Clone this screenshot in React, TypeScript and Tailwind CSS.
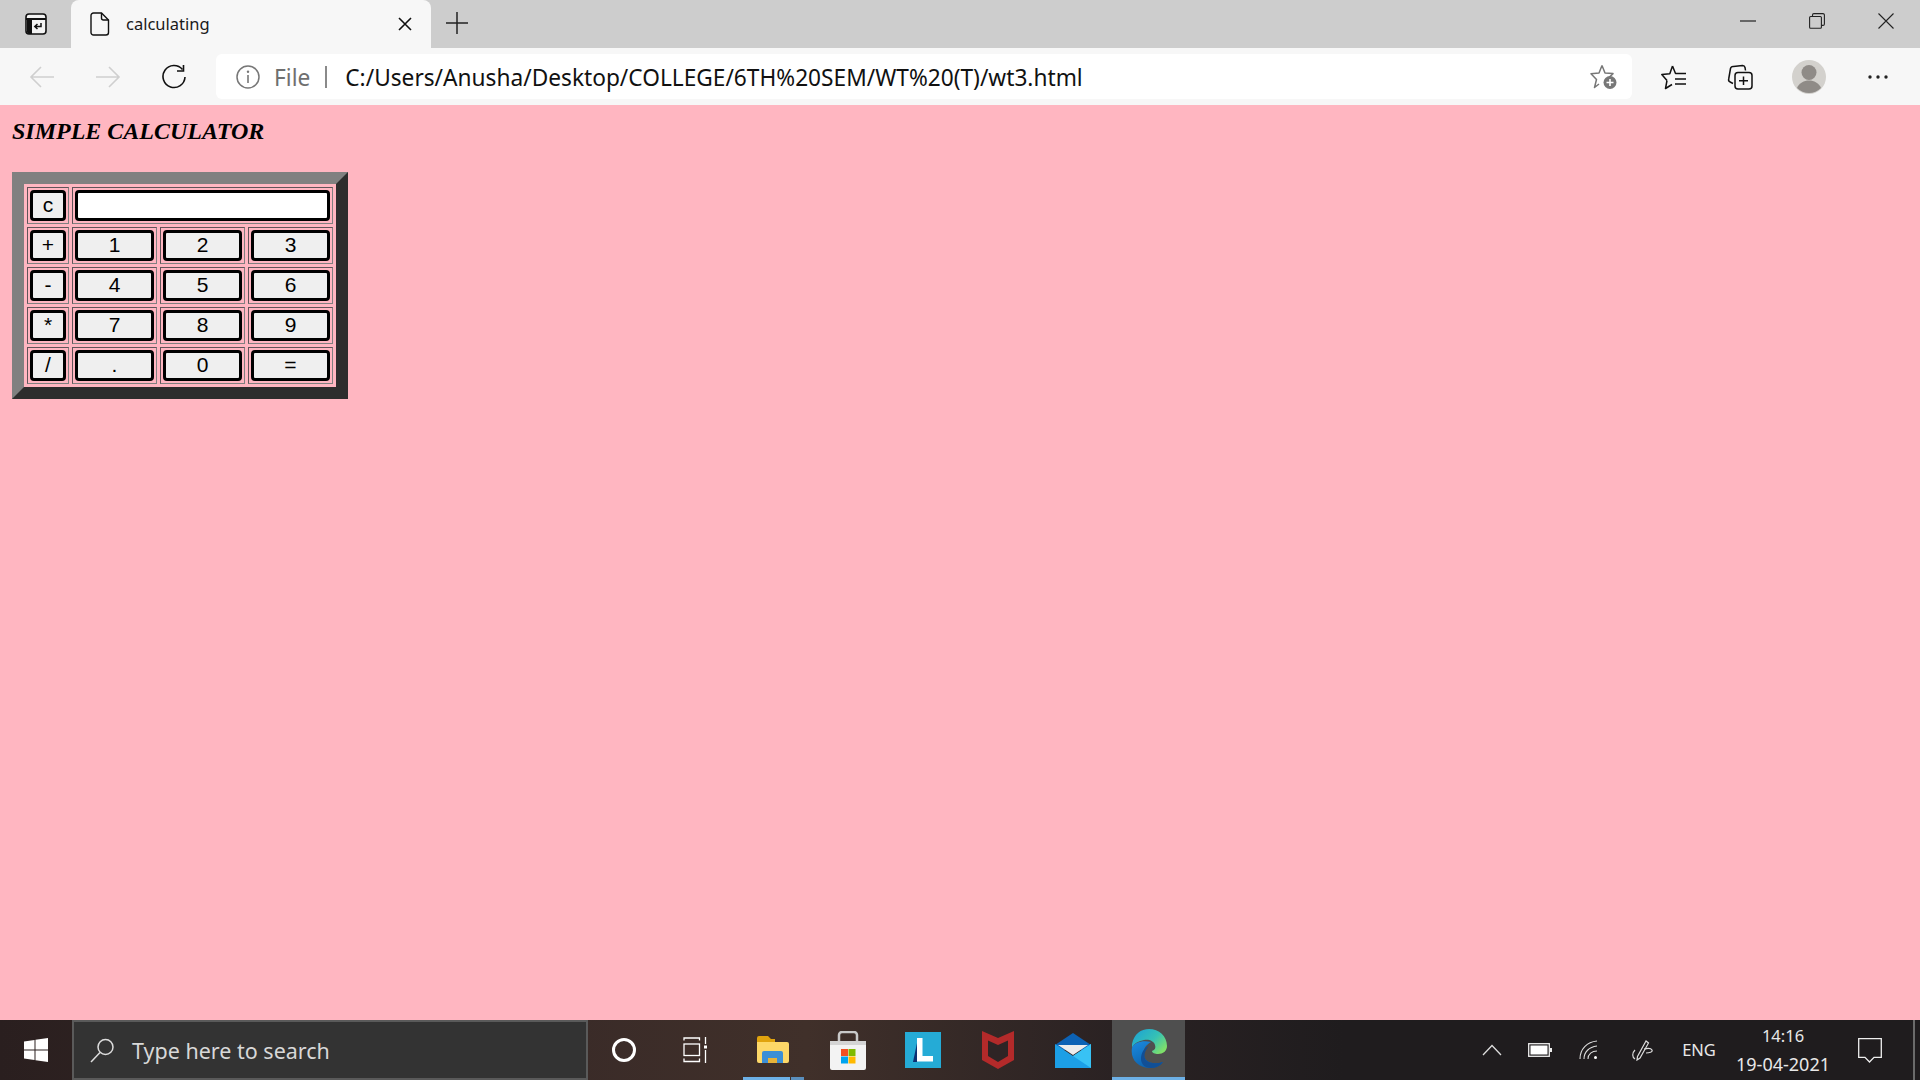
import React from "react";

const uiFont = "font-['Noto_Sans','Open_Sans',sans-serif]";

const Slot = ({ w, children }: { w: string; children: React.ReactNode }) => (
  <div className={`flex h-full shrink-0 items-center justify-center ${w}`}>{children}</div>
);

// ── Browser icons ─────────────────────────────────────────────
const TabActionsIcon = () => (
  <svg width="22" height="22" viewBox="0 0 22 22" fill="none">
    <rect x="1" y="1" width="20" height="20" rx="3" fill="#f3f3f3" stroke="#111" strokeWidth="1.6" />
    <path d="M1 6h20" stroke="#111" strokeWidth="2" />
    <path d="M2 6h5v15H4a2 2 0 0 1-2-2z" fill="#111" />
    <path d="M16 10v3.5h-6M12.5 11l-2.7 2.5 2.7 2.5" stroke="#111" strokeWidth="1.5" />
  </svg>
);

const FileIcon = () => (
  <svg width="20" height="24" viewBox="0 0 20 24" fill="none" stroke="#111" strokeWidth="1.4">
    <path d="M3.5 1h8L18.5 8v12.5a2.5 2.5 0 0 1-2.5 2.5H3.5A2.5 2.5 0 0 1 1 20.5V3.5A2.5 2.5 0 0 1 3.5 1z" />
    <path d="M11.5 1v5a2 2 0 0 0 2 2h5" />
  </svg>
);

const Arrow = ({ flip }: { flip?: boolean }) => (
  <svg width="26" height="24" viewBox="0 0 26 24" fill="none" stroke="#cfcfcf" strokeWidth="1.6" className={flip ? "-scale-x-100" : ""}>
    <path d="M25 12H2M12 2 2 12l10 10" />
  </svg>
);

const ReloadIcon = () => (
  <svg width="26" height="26" viewBox="0 0 26 26" fill="none" stroke="#111" strokeWidth="1.6">
    <path d="M21.5 5.5A11 11 0 1 0 24 13" />
    <path d="M22.5 1v6H16" />
  </svg>
);

const InfoIcon = () => (
  <svg width="24" height="24" viewBox="0 0 24 24" fill="none">
    <circle cx="12" cy="12" r="11" stroke="#777" strokeWidth="1.5" />
    <circle cx="12" cy="6.8" r="1.2" fill="#777" />
    <path d="M12 10v8" stroke="#777" strokeWidth="1.6" />
  </svg>
);

const StarAddIcon = () => (
  <svg width="28" height="26" viewBox="0 0 28 26" fill="none">
    <path d="M12 1.5 15 9l8 .6-5 4.9M9 20l-4.5 3.5 2-8L1 9.7 9 9l3-7.5" stroke="#777" strokeWidth="1.5" strokeLinejoin="round" />
    <circle cx="20" cy="18.5" r="6.5" fill="#777" />
    <path d="M20 15v7M16.5 18.5h7" stroke="#fff" strokeWidth="1.6" />
  </svg>
);

const FavoritesIcon = () => (
  <svg width="26" height="26" viewBox="0 0 26 26" fill="none" stroke="#111" strokeWidth="1.5">
    <path d="M11.5 2 14.5 9.5H16M6 16.5 4.5 24.5 11 20.5M6 16.5.8 10.5l8-.8L11.5 2" strokeLinejoin="round" />
    <path d="M16 9.5h9M14 15h11M14 20h11" />
  </svg>
);

const CollectionsIcon = () => (
  <svg width="26" height="26" viewBox="0 0 26 26" fill="none" stroke="#111" strokeWidth="1.5">
    <path d="M6 19.5 3.2 18a2.5 2.5 0 0 1-1.5-3L3.5 4.5A2.5 2.5 0 0 1 6.5 2.5L15.5 1.5a2.5 2.5 0 0 1 2.5 2l.5 3" />
    <rect x="8" y="8.5" width="17" height="16.5" rx="3" />
    <path d="M16.5 12.5V21M12 16.8h9" />
  </svg>
);

const AvatarIcon = () => (
  <svg width="34" height="34" viewBox="0 0 34 34">
    <circle cx="17" cy="17" r="17" fill="#d3d1cd" />
    <circle cx="17" cy="12.5" r="7.5" fill="#8f8b87" />
    <path d="M5 28c2-5 7-7.5 12-7.5S27 23 29 28a17 17 0 0 1-24 0z" fill="#8f8b87" />
  </svg>
);

const DotsIcon = () => (
  <svg width="20" height="4" viewBox="0 0 20 4" fill="#222">
    <circle cx="2" cy="2" r="1.7" />
    <circle cx="10" cy="2" r="1.7" />
    <circle cx="18" cy="2" r="1.7" />
  </svg>
);

// ── Taskbar icons ─────────────────────────────────────────────
const WindowsLogo = () => (
  <svg width="24" height="24" viewBox="0 0 24 24" fill="#fff">
    <path d="M0 3.4 10.5 2v9.5H0zM11.5 1.8 24 0v11.5H11.5zM0 12.5h10.5V22L0 20.6zM11.5 12.5H24V24l-12.500-1.800z" />
  </svg>
);

const SearchIcon = () => (
  <svg width="25" height="25" viewBox="0 0 25 25" fill="none" stroke="#ddd" strokeWidth="1.5">
    <circle cx="15.5" cy="9" r="7.5" />
    <path d="M10 14.5 1 24" />
  </svg>
);

const TaskViewIcon = () => (
  <svg width="26" height="26" viewBox="0 0 26 26" fill="none" stroke="#fff" strokeWidth="1.3">
    <path d="M1 4V1.5h15.5V4M1 22v3h15.5v-3" transform="translate(0 -.5)" />
    <rect x="1" y="7" width="15.5" height="11.5" />
    <path d="M22.5 0v7M22.5 13v13" />
    <rect x="21" y="8.5" width="3" height="3" fill="#fff" stroke="none" />
  </svg>
);

const FolderIcon = () => (
  <svg width="32" height="29" viewBox="0 0 32 29">
    <path d="M0 2a2 2 0 0 1 2-2h9l3 3h4v4H0z" fill="#e0a30e" />
    <path d="M0 6h30a2 2 0 0 1 2 2v17a2 2 0 0 1-2 2H2a2 2 0 0 1-2-2z" fill="#fdd868" />
    <path d="M5 27V17a2 2 0 0 1 2-2h17a2 2 0 0 1 2 2v10h-6v-5H11v5z" fill="#3b8fd6" />
    <path d="M11 22h9v5h-9z" fill="#e6b33a" />
  </svg>
);

const StoreIcon = () => (
  <svg width="36" height="39" viewBox="0 0 36 39">
    <path d="M9 10V4a3 3 0 0 1 3-3h12a3 3 0 0 1 3 3v6" fill="none" stroke="#c9c9c9" strokeWidth="2.5" />
    <path d="M0 10h36v27a2 2 0 0 1-2 2H2a2 2 0 0 1-2-2z" fill="#f3f3f3" />
    <path d="M0 10h36v4H0z" fill="#d4d4d4" />
    <path d="M11 18h7v7h-7z" fill="#f25022" />
    <path d="M18.5 18h7v7h-7z" fill="#7fba00" />
    <path d="M11 25.5h7v7h-7z" fill="#00a4ef" />
    <path d="M18.5 25.5h7v7h-7z" fill="#ffb900" />
  </svg>
);

const LIcon = () => (
  <svg width="36" height="36" viewBox="0 0 36 36">
    <rect width="36" height="36" fill="#25abd6" />
    <path d="M8 30 12 11v19z" fill="#0b2f73" />
    <path d="M12 6h5.500v18H28v5.500H12z" fill="#fff" />
  </svg>
);

const McAfeeIcon = () => (
  <svg width="32" height="38" viewBox="0 0 32 38">
    <path d="M0 0 16 7 32 0v29l-16 9-16-9z" fill="#b32a2a" />
    <path d="M6 9.500 16 14l10-4.500V25l-10 6-10-6z" fill="#2e2425" />
  </svg>
);

const MailIcon = () => (
  <svg width="36" height="35" viewBox="0 0 36 35">
    <path d="M0 12 18 0l18 12v5H0z" fill="#0c62b5" />
    <path d="M3 12h30L18 22z" fill="#ececec" />
    <path d="M0 11 18 23l18-12v24H0z" fill="#1c9fe6" />
    <path d="M18 23 36 11v24z" fill="#38c2f4" />
  </svg>
);

const EdgeIcon = () => (
  <svg width="36" height="39" viewBox="0 0 36 39">
    <defs>
      <linearGradient id="edgeTop" x1="0" y1="0" x2="1" y2="0.7">
        <stop offset="0" stopColor="#1aa0d8" />
        <stop offset="0.6" stopColor="#35c1b5" />
        <stop offset="1" stopColor="#7fe06a" />
      </linearGradient>
      <linearGradient id="edgeBottom" x1="0" y1="0" x2="0.6" y2="1">
        <stop offset="0" stopColor="#1b8be0" />
        <stop offset="1" stopColor="#0c5ea8" />
      </linearGradient>
    </defs>
    <path d="M1 15C3 5 10 0 18 0c10 0 18 7 18 17 0 5-4 8-9 8-3 0-6-1-6-3 3-1 4-3 3-6-1-4-6-6-11-5C8 12 3 14 1 19z" fill="url(#edgeTop)" />
    <path d="M1 19c-2 11 6 20 17 20 6 0 11-2 14-6-6 2-13 2-17-2-4-5-3-11 1-15 2-2 4-3 4-3-8-2-17 0-19 6z" fill="url(#edgeBottom)" />
    <path d="M15 31c4 4 11 4 17 2-3 4-7 6-12 6-6 0-10-4-10-9 0-6 3-11 8-13-4 4-6 10-3 14z" fill="#114f96" />
  </svg>
);

const BatteryIcon = () => (
  <svg width="24" height="14" viewBox="0 0 24 14">
    <rect x=".7" y=".7" width="20.6" height="12.6" fill="none" stroke="#eee" strokeWidth="1.3" />
    <rect x="2.5" y="2.5" width="17" height="9" fill="#fff" />
    <rect x="22" y="5" width="2" height="4" fill="#eee" />
  </svg>
);

const WifiIcon = () => (
  <svg width="20" height="20" viewBox="0 0 20 20" fill="none" stroke="#ddd" strokeWidth="1.1">
    <path d="M1 19C1 9 8 2 18 1" />
    <path d="M5 19c0-7 5-12 13-13" />
    <path d="M9 19c0-5 4-8 9-8" />
    <circle cx="16.5" cy="17.5" r="1.5" fill="#fff" stroke="none" />
  </svg>
);

const PenIcon = () => (
  <svg width="21" height="21" viewBox="0 0 21 21" fill="none" stroke="#ddd" strokeWidth="1.2">
    <path d="M14 1 5.5 16.500 5 20l3-2L16.500 3z" />
    <path d="M3 10c-3 3-3 7 0 9M12 9c4-1 7-1 8 1s-3 3-6 3" />
  </svg>
);

const NotificationIcon = () => (
  <svg width="24" height="25" viewBox="0 0 24 25" fill="none" stroke="#eee" strokeWidth="1.3">
    <path d="M.7.7h22.600v18.600H16L11.500 24 7 19.300H.7z" />
  </svg>
);

// ── Calculator ────────────────────────────────────────────────
const cellClass =
  "flex border border-t-[#5f5458] border-l-[#5f5458] border-r-[#808080] border-b-[#808080] p-[2px]";
const keyClass =
  "h-full w-full rounded-[4px] border-[3px] border-black bg-[#efefef] pb-[2px] text-center font-['Liberation_Sans',sans-serif] text-[21px] leading-none text-black";

const Key = ({ label }: { label: string }) => (
  <div className={cellClass}>
    <button className={keyClass}>{label}</button>
  </div>
);

const rows = [
  ["+", "1", "2", "3"],
  ["-", "4", "5", "6"],
  ["*", "7", "8", "9"],
  ["/", ".", "0", "="],
];

const Calculator = () => (
  <div className="w-[336px] border-[12px] border-t-[#808080] border-l-[#808080] border-r-[#2d2d2d] border-b-[#2d2d2d]">
    <div className="grid grid-cols-[42px_85px_85px_85px] auto-rows-[37px] gap-[3px] p-[3px]">
      <Key label="c" />
      <div className={`col-span-3 ${cellClass}`}>
        <input readOnly className="h-full w-full rounded-[4px] border-[3px] border-black bg-white outline-none" />
      </div>
      {rows.map((row) => row.map((label) => <Key key={label} label={label} />))}
    </div>
  </div>
);

export default function App() {
  return (
    <div className={`flex h-screen w-screen flex-col overflow-hidden bg-[#ffb6c1] ${uiFont}`}>
      {/* ── Title bar ─────────────────────────────────────────── */}
      <div className="flex h-[48px] shrink-0 bg-[#cdcdcd]">
        <Slot w="w-[71px]">
          <TabActionsIcon />
        </Slot>
        <div className="flex w-[360px] shrink-0 items-center rounded-t-[8px] bg-[#f7f7f7] pl-[19px]">
          <FileIcon />
          <span className="ml-[16px] flex-1 text-[16.5px] text-[#1a1a1a]">calculating</span>
          <svg width="14" height="14" viewBox="0 0 14 14" stroke="#111" strokeWidth="1.6" className="mr-[19px]">
            <path d="M1 1l12 12M13 1 1 13" />
          </svg>
        </div>
        <div className="flex h-full w-[52px] shrink-0 items-center justify-center pb-[3px]">
          <svg width="22" height="22" viewBox="0 0 22 22" stroke="#222" strokeWidth="1.5">
            <path d="M11 0v22M0 11h22" />
          </svg>
        </div>
        <div className="flex-1" />
        <div className="flex h-full w-[207px] shrink-0 items-center pb-[6px]">
          <Slot w="w-[69px]">
            <svg width="16" height="2" viewBox="0 0 16 2" stroke="#222" strokeWidth="1.2">
              <path d="M0 1h16" />
            </svg>
          </Slot>
          <Slot w="w-[69px]">
            <svg width="16" height="16" viewBox="0 0 16 16" fill="none" stroke="#222" strokeWidth="1.1">
              <rect x=".6" y="3.5" width="11.8" height="11.8" rx="1" />
              <path d="M3.5 3.5V2A1.4 1.4 0 0 1 4.9.6h9A1.4 1.4 0 0 1 15.4 2v9a1.4 1.4 0 0 1-1.4 1.4h-1.500" />
            </svg>
          </Slot>
          <Slot w="w-[69px]">
            <svg width="16" height="16" viewBox="0 0 16 16" stroke="#222" strokeWidth="1.1">
              <path d="M.5.5l15 15M15.5.5l-15 15" />
            </svg>
          </Slot>
        </div>
      </div>

      {/* ── Toolbar ───────────────────────────────────────────── */}
      <div className="flex h-[57px] shrink-0 items-center bg-[#f7f7f7] pl-[9px]">
        <Slot w="w-[66px]">
          <Arrow />
        </Slot>
        <Slot w="w-[66px]">
          <Arrow flip />
        </Slot>
        <Slot w="w-[66px]">
          <ReloadIcon />
        </Slot>
        <div className="ml-[9px] flex h-[45px] w-[1416px] shrink-0 items-center rounded-[6px] bg-white pl-[20px]">
          <InfoIcon />
          <span className="ml-[14px] pt-[3px] text-[22.7px] text-[#6f6f6f]">File</span>
          <span className="ml-[15px] h-[22px] w-[2px] bg-[#8a8a8a]" />
          <span className="ml-[18px] flex-1 pt-[3px] text-[22.7px] text-[#111]">
            C:/Users/Anusha/Desktop/COLLEGE/6TH%20SEM/WT%20(T)/wt3.html
          </span>
          <div className="mr-[14px]">
            <StarAddIcon />
          </div>
        </div>
        <Slot w="w-[9px]">{null}</Slot>
        <Slot w="w-[66px]">
          <FavoritesIcon />
        </Slot>
        <Slot w="w-[66px]">
          <CollectionsIcon />
        </Slot>
        <Slot w="w-[71px]">
          <AvatarIcon />
        </Slot>
        <Slot w="w-[67px]">
          <DotsIcon />
        </Slot>
      </div>

      {/* ── Page ──────────────────────────────────────────────── */}
      <div className="min-h-0 flex-1 px-[12px] pt-[12px]">
        <h2 className="font-['Liberation_Serif',serif] text-[24px] leading-[28px] font-bold text-black italic">
          SIMPLE CALCULATOR
        </h2>
        <div className="mt-[27px]">
          <Calculator />
        </div>
      </div>

      {/* ── Taskbar ───────────────────────────────────────────── */}
      <div className="flex h-[60px] shrink-0 bg-[linear-gradient(90deg,#2a1f1f_0%,#3a2b28_30%,#40302a_42%,#2a2223_58%,#1f1c1e_70%,#1f1c1e_100%)]">
        <Slot w="w-[72px]">
          <WindowsLogo />
        </Slot>
        <div className="flex w-[516px] shrink-0 items-center border-2 border-[#5a5a5a] bg-[#333333] pl-[16px]">
          <SearchIcon />
          <span className="ml-[17px] pt-[2px] text-[21.5px] text-[#d8d8d8]">Type here to search</span>
        </div>
        <Slot w="w-[72px]">
          <div className="h-[24px] w-[24px] rounded-full border-[3px] border-white" />
        </Slot>
        <Slot w="w-[72px]">
          <TaskViewIcon />
        </Slot>
        <div className="w-[3px] shrink-0" />
        <div className="relative flex h-full w-[75px] shrink-0 items-center justify-center">
          <FolderIcon />
          <span className="absolute bottom-0 left-[8px] h-[3px] w-[47px] bg-[#6cb0e6]" />
          <span className="absolute bottom-0 left-[56px] h-[3px] w-[13px] bg-[#5a8fbd]" />
        </div>
        <Slot w="w-[75px]">
          <StoreIcon />
        </Slot>
        <Slot w="w-[75px]">
          <LIcon />
        </Slot>
        <Slot w="w-[75px]">
          <McAfeeIcon />
        </Slot>
        <Slot w="w-[75px]">
          <MailIcon />
        </Slot>
        <div className="ml-[2px] flex h-full w-[73px] shrink-0 items-center justify-center border-b-[3px] border-[#6cb0e6] bg-[#4f4f4f]">
          <EdgeIcon />
        </div>
        <div className="flex-1" />
        <Slot w="w-[48px]">
          <svg width="20" height="12" viewBox="0 0 20 12" fill="none" stroke="#ddd" strokeWidth="1.3">
            <path d="M1 11 10 1.5 19 11" />
          </svg>
        </Slot>
        <Slot w="w-[48px]">
          <BatteryIcon />
        </Slot>
        <Slot w="w-[50px]">
          <WifiIcon />
        </Slot>
        <Slot w="w-[56px]">
          <PenIcon />
        </Slot>
        <Slot w="w-[58px]">
          <span className="text-[16.5px] text-[#e8e8e8]">ENG</span>
        </Slot>
        <div className="flex h-full w-[110px] shrink-0 flex-col items-center justify-center text-[16.5px] leading-[28px] text-[#e8e8e8]">
          <span>14:16</span>
          <span className="text-[18px]">19-04-2021</span>
        </div>
        <Slot w="w-[64px]">
          <NotificationIcon />
        </Slot>
        <div className="flex h-full w-[18px] shrink-0 justify-end pr-[5px]">
          <span className="h-full w-[2px] bg-[#6a6a6a]" />
        </div>
      </div>
    </div>
  );
}
